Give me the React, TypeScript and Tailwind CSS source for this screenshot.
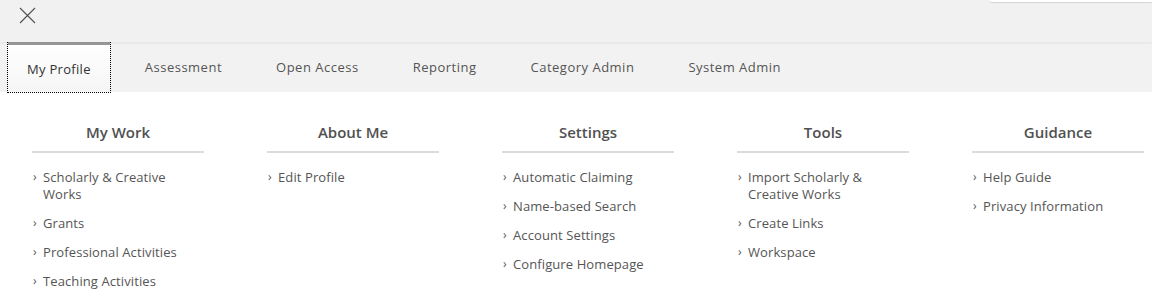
const tabs = ['My Profile', 'Assessment', 'Open Access', 'Reporting', 'Category Admin', 'System Admin'];

const columns = [
  { title: 'My Work', links: ['Scholarly & Creative Works', 'Grants', 'Professional Activities', 'Teaching Activities'] },
  { title: 'About Me', links: ['Edit Profile'] },
  { title: 'Settings', links: ['Automatic Claiming', 'Name-based Search', 'Account Settings', 'Configure Homepage'] },
  { title: 'Tools', links: ['Import Scholarly & Creative Works', 'Create Links', 'Workspace'] },
  { title: 'Guidance', links: ['Help Guide', 'Privacy Information'] },
];

const App: React.FC = () => {
  return (
    <div className="w-[1152px] h-[296px] overflow-hidden bg-white font-['Open_Sans',sans-serif] text-[13px] text-[#555]">
      {/* top bar */}
      <div className="relative z-10 h-[42px] bg-[#f1f1f1] shadow-[0_1px_3px_rgba(0,0,0,0.07)] flex justify-between items-start">
        <button className="ml-[19px] mt-[7px] w-[17px] h-[17px]">
          <svg width="17" height="17" viewBox="0 0 17 17" fill="none" stroke="#555" strokeWidth="1.2">
            <path d="M1 1 L16 16 M16 1 L1 16" />
          </svg>
        </button>
        <div className="w-[162px] h-[2px] bg-white rounded-bl-sm shadow-[0_1px_1px_rgba(0,0,0,0.12)]"></div>
      </div>

      {/* tabs */}
      <div className="h-[50px] bg-[#f2f2f2] flex items-stretch">
        {tabs.map((t, i) =>
          i === 0 ? (
            <div
              key={t}
              className="mx-2 px-[19px] flex items-center border-t-[3px] border-[#9a9a9a] bg-gradient-to-b from-white to-[#f5f5f5] outline-1 outline-dotted outline-black text-[#333] tracking-[0.3px] pt-[3px]"
            >
              {t}
            </div>
          ) : (
            <div key={t} className="mx-2 px-[19px] flex items-center tracking-[0.5px] pt-[2px]">
              {t}
            </div>
          )
        )}
      </div>

      {/* menu columns */}
      <div className="flex gap-[63px] pl-8 pt-[30px]">
        {columns.map((c) => (
          <div key={c.title} className="w-[172px]">
            <h3 className="text-center text-[15px] leading-5 font-semibold text-[#505050] pb-[9px] border-b-2 border-[#dcdcdc]">
              {c.title}
            </h3>
            <ul className="mt-[16px] flex flex-col gap-3 pr-2">
              {c.links.map((l) => (
                <li key={l} className="flex leading-[17px] tracking-[0.1px]">
                  <span className="w-[11px] shrink-0 text-[12px] leading-[15px] pl-px">›</span>
                  <span>{l}</span>
                </li>
              ))}
            </ul>
          </div>
        ))}
      </div>
    </div>
  );
};

export default App;
